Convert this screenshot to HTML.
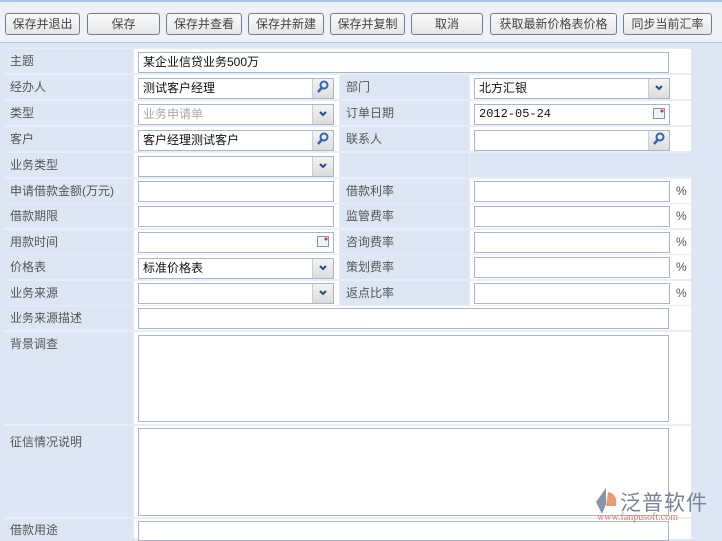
<!DOCTYPE html>
<html><head><meta charset="utf-8"><style>
*{margin:0;padding:0;box-sizing:border-box}
body{width:722px;height:534px;overflow:hidden;background:#dde7f4;position:relative;font-family:"Liberation Sans","Noto Sans CJK SC",sans-serif;font-size:12px;color:#333}
.top{position:absolute;left:0;top:0;width:722px;height:43px;background:#eef1f5;border-top:2px solid #a9c4e6;border-bottom:1px solid #a9c4e6}
.b{position:absolute;top:13px;height:22px;border:1px solid #6f7f94;border-radius:3px;background:linear-gradient(#fbfbfb,#e3e5e8);font-size:12px;color:#444;text-align:center;line-height:20px;white-space:nowrap}
.l{position:absolute;background:#dde7f4;color:#555;padding-left:6px;font-size:12px;line-height:24px}
.v{position:absolute;background:#fff}
.i{position:absolute;height:21px;border:1px solid #a7b6ca;background:#fff;font-size:12px;line-height:19px;padding-left:4px;color:#111}
.btn{position:absolute;right:0;top:0;width:21px;height:19px;background:linear-gradient(#f4f4f4,#dcdcdc);border-left:1px solid #c8ced6;text-align:center}
.pct{position:absolute;font-size:12px;color:#555}
</style></head><body>
<div class="top"></div>
<div class="b" style="left:5px;width:75px">保存并退出</div>
<div class="b" style="left:87px;width:73px">保存</div>
<div class="b" style="left:166px;width:76px">保存并查看</div>
<div class="b" style="left:248px;width:76px">保存并新建</div>
<div class="b" style="left:330px;width:75px">保存并复制</div>
<div class="b" style="left:411px;width:72px">取消</div>
<div class="b" style="left:490px;width:127px">获取最新价格表价格</div>
<div class="b" style="left:623px;width:89px">同步当前汇率</div>

<div class="v" style="left:4px;top:48px;width:687px;height:486px;background:#e8eef7"></div>

<div class="l" style="left:4px;top:49px;width:129px;height:24px">主题</div>
<div class="v" style="left:134px;top:49px;width:557px;height:24px"></div>
<div class="i" style="left:138px;top:52px;width:531px">某企业信贷业务500万</div>

<div class="l" style="left:4px;top:75px;width:129px;height:24px">经办人</div>
<div class="v" style="left:134px;top:75px;width:205px;height:24px"></div>
<div class="i" style="left:138px;top:78px;width:196px">测试客户经理<div class="btn"><svg width="14" height="16" viewBox="0 0 14 16"><circle cx="8" cy="6" r="3.5" fill="none" stroke="#2a66b8" stroke-width="2"/><path d="M6 8.5L2 13" stroke="#2a66b8" stroke-width="2.5"/></svg></div></div>
<div class="l" style="left:340px;top:75px;width:129px;height:24px">部门</div>
<div class="v" style="left:470px;top:75px;width:221px;height:24px"></div>
<div class="i" style="left:474px;top:78px;width:196px">北方汇银<div class="btn"><svg width="10" height="16" viewBox="0 0 10 16"><path d="M2 7l3 3 3-3" fill="none" stroke="#1f4f8f" stroke-width="2"/></svg></div></div>

<div class="l" style="left:4px;top:101px;width:129px;height:24px">类型</div>
<div class="v" style="left:134px;top:101px;width:205px;height:24px"></div>
<div class="i" style="left:138px;top:104px;width:196px;color:#aaa">业务申请单<div class="btn"><svg width="10" height="16" viewBox="0 0 10 16"><path d="M2 7l3 3 3-3" fill="none" stroke="#1f4f8f" stroke-width="2"/></svg></div></div>
<div class="l" style="left:340px;top:101px;width:129px;height:24px">订单日期</div>
<div class="v" style="left:470px;top:101px;width:221px;height:24px"></div>
<div class="i" style="left:474px;top:104px;width:196px;font-family:'Liberation Mono',monospace">2012-05-24<div class="btn" style="background:#fff;border:0"><svg width="14" height="16" viewBox="0 0 14 16"><rect x="1.5" y="3.5" width="11" height="10" fill="#eef3fa" stroke="#7f93b3"/><circle cx="10" cy="6" r="1.5" fill="#d33"/></svg></div></div>

<div class="l" style="left:4px;top:127px;width:129px;height:24px">客户</div>
<div class="v" style="left:134px;top:127px;width:205px;height:24px"></div>
<div class="i" style="left:138px;top:130px;width:196px">客户经理测试客户<div class="btn"><svg width="14" height="16" viewBox="0 0 14 16"><circle cx="8" cy="6" r="3.5" fill="none" stroke="#2a66b8" stroke-width="2"/><path d="M6 8.5L2 13" stroke="#2a66b8" stroke-width="2.5"/></svg></div></div>
<div class="l" style="left:340px;top:127px;width:129px;height:24px">联系人</div>
<div class="v" style="left:470px;top:127px;width:221px;height:24px"></div>
<div class="i" style="left:474px;top:130px;width:196px"><div class="btn"><svg width="14" height="16" viewBox="0 0 14 16"><circle cx="8" cy="6" r="3.5" fill="none" stroke="#2a66b8" stroke-width="2"/><path d="M6 8.5L2 13" stroke="#2a66b8" stroke-width="2.5"/></svg></div></div>

<div class="l" style="left:4px;top:153px;width:129px;height:24px">业务类型</div>
<div class="v" style="left:134px;top:153px;width:205px;height:24px"></div>
<div class="i" style="left:138px;top:156px;width:196px"><div class="btn"><svg width="10" height="16" viewBox="0 0 10 16"><path d="M2 7l3 3 3-3" fill="none" stroke="#1f4f8f" stroke-width="2"/></svg></div></div>
<div class="l" style="left:340px;top:153px;width:129px;height:24px"></div>
<div class="l" style="left:470px;top:153px;width:221px;height:24px"></div>

<div class="l" style="left:4px;top:179px;width:129px;height:24px">申请借款金额(万元)</div>
<div class="v" style="left:134px;top:179px;width:205px;height:24px"></div>
<div class="i" style="left:138px;top:181px;width:196px"></div>
<div class="l" style="left:340px;top:179px;width:129px;height:24px">借款利率</div>
<div class="v" style="left:470px;top:179px;width:221px;height:24px"></div>
<div class="i" style="left:474px;top:181px;width:196px"></div><div class="pct" style="left:676px;top:184px">%</div>

<div class="l" style="left:4px;top:204px;width:129px;height:24px">借款期限</div>
<div class="v" style="left:134px;top:204px;width:205px;height:24px"></div>
<div class="i" style="left:138px;top:206px;width:196px"></div>
<div class="l" style="left:340px;top:204px;width:129px;height:24px">监管费率</div>
<div class="v" style="left:470px;top:204px;width:221px;height:24px"></div>
<div class="i" style="left:474px;top:206px;width:196px"></div><div class="pct" style="left:676px;top:209px">%</div>

<div class="l" style="left:4px;top:230px;width:129px;height:24px">用款时间</div>
<div class="v" style="left:134px;top:230px;width:205px;height:24px"></div>
<div class="i" style="left:138px;top:232px;width:196px"><div class="btn" style="background:#fff;border:0"><svg width="14" height="16" viewBox="0 0 14 16"><rect x="1.5" y="3.5" width="11" height="10" fill="#eef3fa" stroke="#7f93b3"/><circle cx="10" cy="6" r="1.5" fill="#d33"/></svg></div></div>
<div class="l" style="left:340px;top:230px;width:129px;height:24px">咨询费率</div>
<div class="v" style="left:470px;top:230px;width:221px;height:24px"></div>
<div class="i" style="left:474px;top:232px;width:196px"></div><div class="pct" style="left:676px;top:235px">%</div>

<div class="l" style="left:4px;top:255px;width:129px;height:24px">价格表</div>
<div class="v" style="left:134px;top:255px;width:205px;height:24px"></div>
<div class="i" style="left:138px;top:258px;width:196px">标准价格表<div class="btn"><svg width="10" height="16" viewBox="0 0 10 16"><path d="M2 7l3 3 3-3" fill="none" stroke="#1f4f8f" stroke-width="2"/></svg></div></div>
<div class="l" style="left:340px;top:255px;width:129px;height:24px">策划费率</div>
<div class="v" style="left:470px;top:255px;width:221px;height:24px"></div>
<div class="i" style="left:474px;top:257px;width:196px"></div><div class="pct" style="left:676px;top:260px">%</div>

<div class="l" style="left:4px;top:281px;width:129px;height:24px">业务来源</div>
<div class="v" style="left:134px;top:281px;width:205px;height:24px"></div>
<div class="i" style="left:138px;top:283px;width:196px"><div class="btn"><svg width="10" height="16" viewBox="0 0 10 16"><path d="M2 7l3 3 3-3" fill="none" stroke="#1f4f8f" stroke-width="2"/></svg></div></div>
<div class="l" style="left:340px;top:281px;width:129px;height:24px">返点比率</div>
<div class="v" style="left:470px;top:281px;width:221px;height:24px"></div>
<div class="i" style="left:474px;top:283px;width:196px"></div><div class="pct" style="left:676px;top:286px">%</div>

<div class="l" style="left:4px;top:306px;width:129px;height:24px">业务来源描述</div>
<div class="v" style="left:134px;top:306px;width:557px;height:24px"></div>
<div class="i" style="left:138px;top:308px;width:531px"></div>

<div class="l" style="left:4px;top:332px;width:129px;height:92px">背景调查</div>
<div class="v" style="left:134px;top:332px;width:557px;height:92px"></div>
<div class="i" style="left:138px;top:335px;width:531px;height:87px"></div>

<div class="l" style="left:4px;top:426px;width:129px;height:91px;padding-top:4px">征信情况说明</div>
<div class="v" style="left:134px;top:426px;width:557px;height:91px"></div>
<div class="i" style="left:138px;top:428px;width:531px;height:88px"></div>

<div class="l" style="left:4px;top:519px;width:129px;height:20px;line-height:22px">借款用途</div>
<div class="v" style="left:134px;top:519px;width:557px;height:20px"></div>
<div class="i" style="left:138px;top:521px;width:531px;height:20px"></div>

<svg style="position:absolute;left:592px;top:486px" width="30" height="30" viewBox="0 0 30 30"><path d="M14 2 L4 16 L10 28 L14 18 Z" fill="#8a94a8"/><path d="M16 6 Q26 8 24 20 L14 20 Z" fill="#e89a72"/></svg>
<div style="position:absolute;left:620px;top:487px;font-size:21px;color:#7a8497;letter-spacing:1px">泛普软件</div>
<div style="position:absolute;left:597px;top:512px;font-size:10px;color:#e08060;font-family:'Liberation Serif',serif">www.fanpusoft.com</div>
</body></html>
